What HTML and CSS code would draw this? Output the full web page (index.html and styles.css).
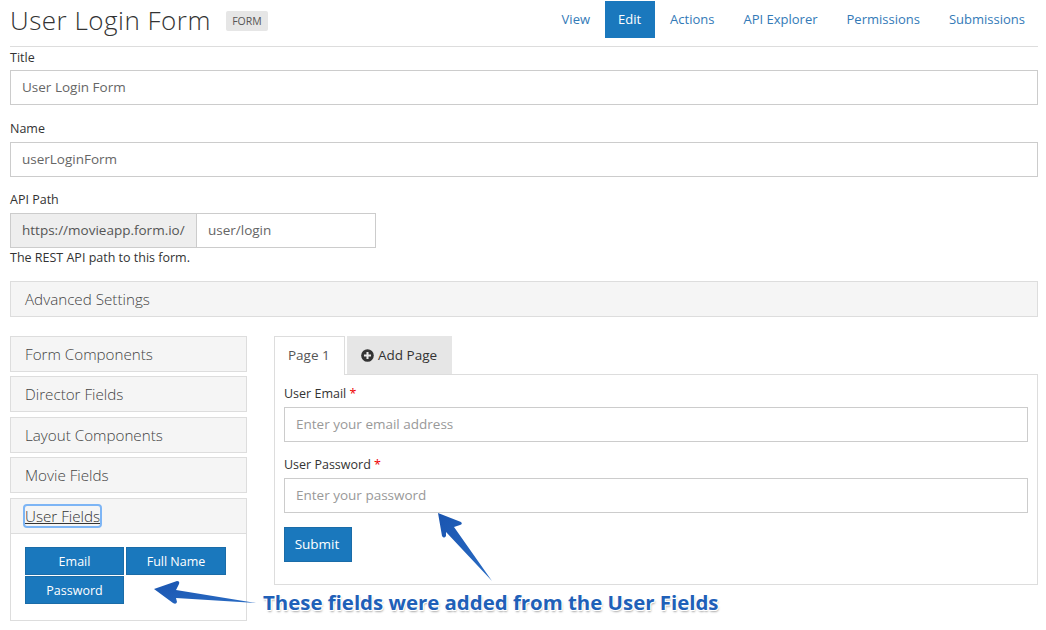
FILE: index.html
```html
<!DOCTYPE html>
<html lang="en">
<head>
    <meta charset="UTF-8">
    <meta name="viewport" content="width=device-width, initial-scale=1.0">
    <title>User Login Form</title>
    <link rel="stylesheet" href="styles.css">
</head>
<body>
    <div class="page">
        <header class="page-header">
            <h1>User Login Form <span class="type-label">FORM</span></h1>
            <nav class="nav-tabs">
                <a href="#">View</a>
                <a href="#" class="active">Edit</a>
                <a href="#">Actions</a>
                <a href="#">API Explorer</a>
                <a href="#">Permissions</a>
                <a href="#">Submissions</a>
            </nav>
        </header>

        <div class="settings">
            <div class="form-group">
                <label for="title">Title</label>
                <input type="text" id="title" value="User Login Form">
            </div>
            <div class="form-group">
                <label for="name">Name</label>
                <input type="text" id="name" value="userLoginForm">
            </div>
            <div class="form-group path-group">
                <label for="path">API Path</label>
                <div class="input-group">
                    <span class="addon">https://movieapp.form.io/</span>
                    <input type="text" id="path" value="user/login">
                </div>
                <p class="help">The REST API path to this form.</p>
            </div>
            <div class="panel-heading advanced">Advanced Settings</div>
        </div>

        <div class="builder">
            <aside class="sidebar">
                <div class="panel"><div class="panel-heading">Form Components</div></div>
                <div class="panel"><div class="panel-heading">Director Fields</div></div>
                <div class="panel"><div class="panel-heading">Layout Components</div></div>
                <div class="panel"><div class="panel-heading">Movie Fields</div></div>
                <div class="panel">
                    <div class="panel-heading"><a href="#" class="focused">User Fields</a></div>
                    <div class="panel-body">
                        <button class="field-btn">Email</button>
                        <button class="field-btn">Full Name</button>
                        <button class="field-btn">Password</button>
                    </div>
                </div>
            </aside>

            <main class="preview">
                <div class="page-tabs">
                    <a href="#" class="page-tab current">Page 1</a>
                    <a href="#" class="page-tab add">
                        <svg class="plus-icon" viewBox="0 0 14 14">
                            <circle cx="7" cy="7" r="6.8" fill="#333"/>
                            <path d="M3.2 7h7.6M7 3.2v7.6" stroke="#eaeaea" stroke-width="2.2"/>
                        </svg>
                        Add Page
                    </a>
                </div>
                <form class="preview-box">
                    <div class="form-group">
                        <label for="email">User Email <span class="req">*</span></label>
                        <input type="text" id="email" placeholder="Enter your email address">
                    </div>
                    <div class="form-group">
                        <label for="password">User Password <span class="req">*</span></label>
                        <input type="text" id="password" placeholder="Enter your password">
                    </div>
                    <button type="button" class="submit-btn">Submit</button>
                </form>
            </main>
        </div>

        <!-- screenshot annotation on top of the page -->
        <svg class="arrows" width="1046" height="630" viewBox="0 0 1046 630">
            <defs>
                <linearGradient id="arrowFill" x1="0" y1="0" x2="1" y2="1">
                    <stop offset="0" stop-color="#1a55b0"/>
                    <stop offset="1" stop-color="#2a6cc4"/>
                </linearGradient>
            </defs>
            <path d="M154 589 L177 581 Q180 581 179 584 L176 590 L256 603 L176 598 L177 602 Q176 605 173 603 Z" fill="url(#arrowFill)"/>
            <path d="M438 513 L461 522 Q463 524 460 525 L454 527 L492 581 L446 532 L446 536 Q444 539 442 536 Z" fill="url(#arrowFill)"/>
        </svg>
        <div class="note">These fields were added from the User Fields</div>
    </div>
</body>
</html>
```

FILE: styles.css
```css
* {
    box-sizing: border-box;
}
html, body {
    height: 630px;
    overflow: hidden;
}
body {
    margin: 0;
    background: #fff;
    color: #333;
    font-family: "Open Sans", sans-serif;
    font-size: 12.5px;
}
.page {
    padding: 0 8px 0 10px;
}

/* header */
.page-header {
    display: flex;
    justify-content: space-between;
    height: 47px;
    border-bottom: 1px solid #ddd;
}
h1 {
    margin: 0;
    font-size: 26px;
    font-weight: 300;
    line-height: 41px;
    letter-spacing: 0.5px;
}
.type-label {
    display: inline-block;
    margin-left: 8px;
    padding: 0 6px;
    height: 20px;
    background: #e6e6e6;
    border-radius: 2px;
    color: #555;
    font-size: 10.5px;
    font-weight: 400;
    line-height: 20px;
    letter-spacing: 0;
    vertical-align: 5px;
}
.nav-tabs {
    display: flex;
    padding: 1px 0 0;
    height: 38px;
    margin-right: -1.5px;
}
.nav-tabs a {
    padding: 0 14.5px;
    color: #337ab7;
    font-size: 13px;
    line-height: 36px;
    text-decoration: none;
}
.nav-tabs a.active {
    background: #1a78bd;
    color: #fff;
    padding: 0 13.5px;
    margin: 0 1px 0 0;
}

/* settings form */
.form-group {
    margin-bottom: 15px;
}
.settings .form-group {
    margin-bottom: 14px;
}
label {
    display: block;
    margin-bottom: 5px;
    height: 17px;
    line-height: 17px;
    font-size: 12.5px;
}
input[type="text"] {
    display: block;
    width: 100%;
    height: 35px;
    padding: 0 11px 1px;
    border: 1px solid #ccc;
    color: #666;
    font-family: "Open Sans", sans-serif;
    font-size: 13.5px;
    outline: none;
}
input::placeholder {
    color: #999;
    opacity: 1;
}
.settings .form-group:first-child {
    padding-top: 2px;
    margin-bottom: 15px;
}
.settings .form-group:first-child label {
    margin-bottom: 4px;
}
.input-group {
    display: flex;
    width: 366px;
}
.addon {
    flex-shrink: 0;
    width: 186px;
    height: 35px;
    padding-left: 11px;
    background: #eee;
    border: 1px solid #ccc;
    border-right: none;
    color: #555;
    font-size: 13.5px;
    line-height: 32px;
    white-space: nowrap;
}
.input-group input[type="text"] {
    flex: 1;
    width: auto;
    min-width: 0;
}
.help {
    margin: 0;
    padding-top: 1px;
    height: 18px;
    font-size: 12.5px;
    line-height: 18px;
}
.settings .path-group {
    margin-bottom: 15px;
}
.panel-heading {
    height: 34px;
    padding: 0 14px;
    background: #f5f5f5;
    color: #444;
    font-size: 15.2px;
    font-weight: 300;
    line-height: 34px;
}
.panel-heading.advanced {
    height: 36px;
    border: 1px solid #ddd;
    line-height: 35px;
}

/* builder */
.builder {
    display: flex;
    gap: 27px;
    margin-top: 19px;
}
.sidebar {
    display: flex;
    flex-direction: column;
    gap: 4.4px;
    width: 237px;
    flex-shrink: 0;
}
.panel {
    border: 1px solid #ddd;
}
.panel-body {
    display: grid;
    grid-template-columns: 99px 100px;
    grid-auto-rows: 28px;
    gap: 1px 2px;
    height: 87px;
    padding: 13px 14px 0;
    border-top: 1px solid #ddd;
}
.focused {
    color: #333;
    outline: 2px solid #7db5f5;
    outline-offset: 0;
    border-radius: 2px;
}
.field-btn {
    border: 1px solid #1a6ca8;
    background: #1a78bd;
    color: #fff;
    font-family: "Open Sans", sans-serif;
    font-size: 12.5px;
    font-weight: 500;
    padding: 2px 0 0;
}
.preview {
    flex: 1;
}
.page-tabs {
    display: flex;
    gap: 2px;
    height: 38px;
}
.page-tab {
    height: 38px;
    color: #555;
    font-size: 13.5px;
    line-height: 37px;
    text-decoration: none;
}
.page-tab.current {
    position: relative;
    width: 71px;
    height: 39px;
    padding-left: 13px;
    background: #fff;
    border: 1px solid #ddd;
    border-bottom: none;
    z-index: 1;
}
.page-tab.add {
    display: flex;
    align-items: center;
    gap: 4px;
    width: 105px;
    padding-left: 14px;
    background: #e6e6e6;
    color: #333;
}
.plus-icon {
    width: 13px;
    height: 13px;
}
.preview-box {
    height: 211px;
    padding: 10px 9px;
    border: 1px solid #ddd;
}
.preview-box .form-group {
    margin-bottom: 14px;
}
.req {
    color: #e00;
}
.submit-btn {
    display: block;
    width: 68px;
    height: 35px;
    margin-top: 14px;
    padding: 0 2px 2px 0;
    border: 1px solid #1a6ca8;
    background: #1a78bd;
    color: #fff;
    font-family: "Open Sans", sans-serif;
    font-size: 13.5px;
}

/* annotation */
.arrows {
    position: absolute;
    left: 0;
    top: 0;
    pointer-events: none;
}
.note {
    position: absolute;
    left: 263px;
    top: 588px;
    color: #2060b8;
    font-size: 20.4px;
    font-weight: 700;
    line-height: 28px;
    white-space: nowrap;
    text-shadow: 1px 1px 0 #fff, -1px -1px 0 #fff, 1px -1px 0 #fff, -1px 1px 0 #fff, 1px 2px 2px #aaa;
}
```
